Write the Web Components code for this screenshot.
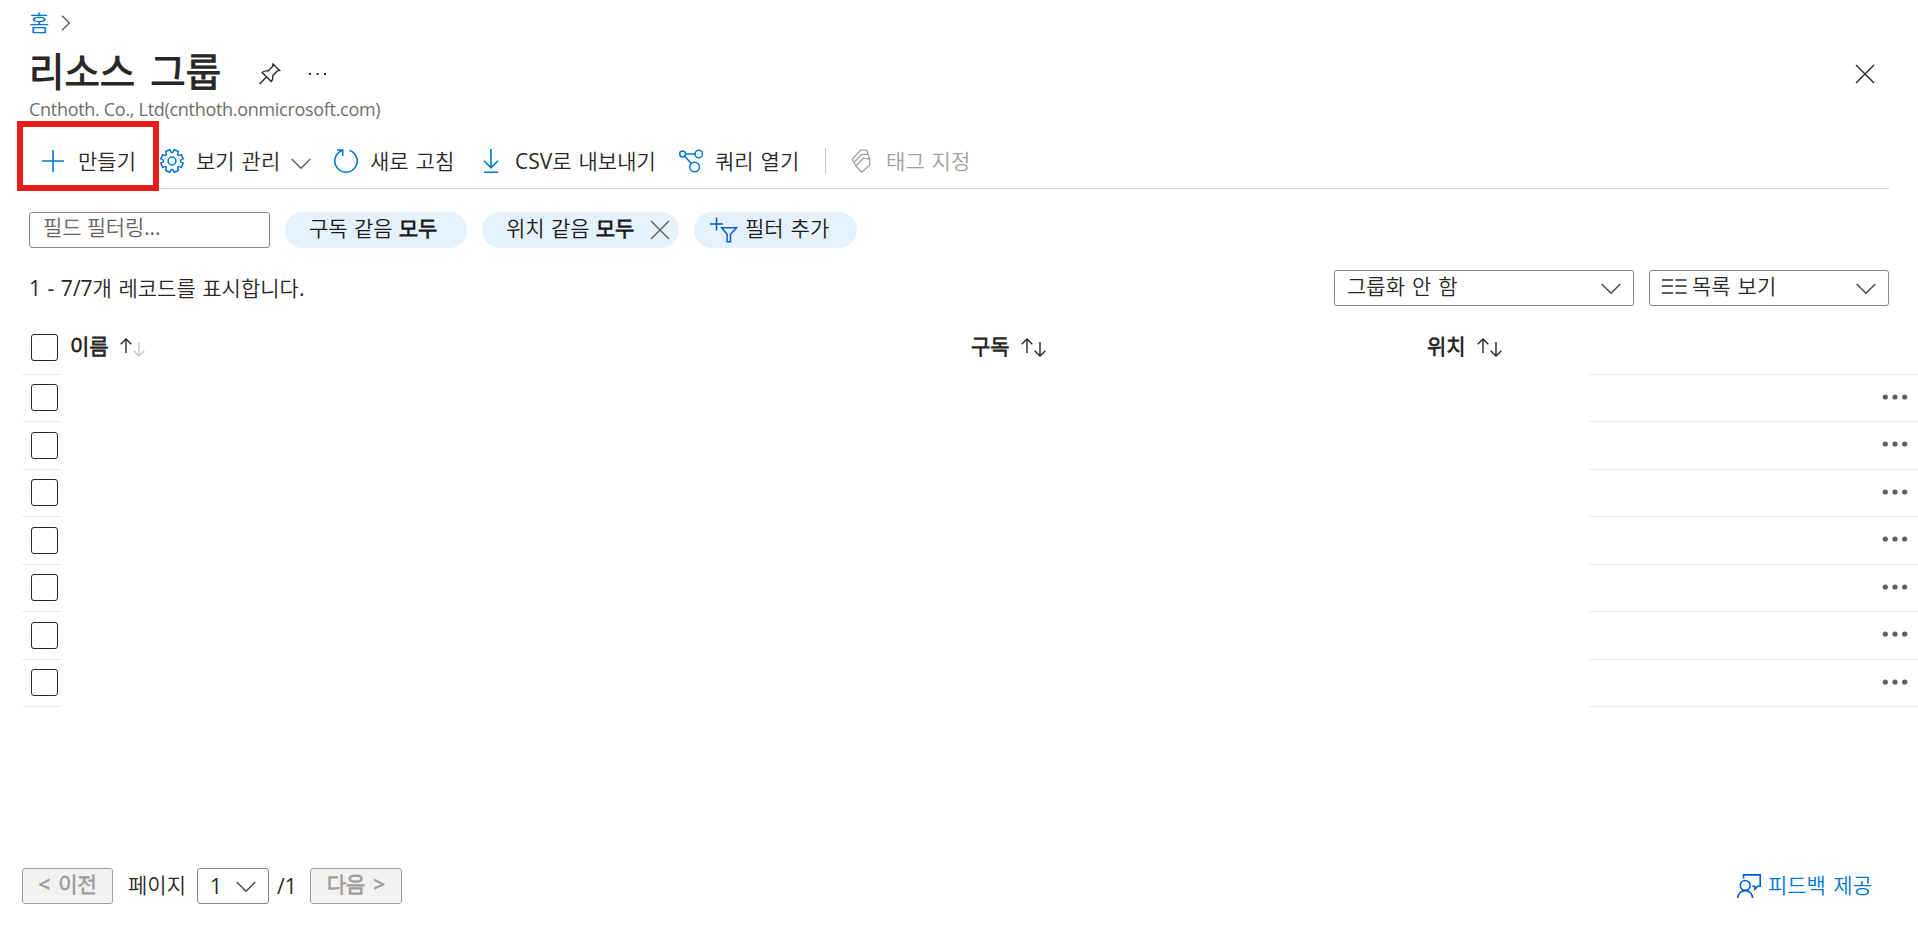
<!DOCTYPE html>
<html lang="ko">
<head>
<meta charset="utf-8">
<title>리소스 그룹</title>
<style>
  body {
    margin: 0;
    background: #fff;
    color: #292827;
    font: 21px/36px "Open Sans", "Noto Sans CJK KR DemiLight", "Noto Sans CJK KR Light", "Noto Sans CJK KR", sans-serif;
    word-spacing: 1.5px;
  }
</style>
</head>
<body>
<resource-page></resource-page>
<script>
// 톱니바퀴 외곽선 (톱니 8개)
const gearPath = () => {
  const points = [];
  for (let i = 0; i < 8; i++) {
    [[-0.3, 8.6], [-0.2, 11.4], [0.2, 11.4], [0.3, 8.6]].forEach(([offset, radius]) => {
      const angle = (i * Math.PI) / 4 + Math.PI / 8 + offset;
      points.push(`${(12 + radius * Math.cos(angle)).toFixed(2)} ${(12 + radius * Math.sin(angle)).toFixed(2)}`);
    });
  }
  return `M${points.join("L")}z`;
};

// name: [width, height, stroke width, markup]
const ICONS = {
  add: [24, 24, 1.6, `<path d="M11 1v22M0 12h22"/>`],
  gear: [24, 24, 1.5, `<path stroke-linejoin="round" d="${gearPath()}"/><circle cx="12" cy="12" r="3.9"/>`],
  refresh: [24, 24, 1.6, `<path d="M15.6 1.4A11.2 11.2 0 1 1 8.4 1.4M3 1h5.7v6"/>`],
  download: [24, 24, 1.6, `<path d="M12 0v18.5M5 11.8l7 7 7-7M5 23.2h14"/>`],
  query: [24, 24, 1.5, `<circle cx="3.6" cy="5" r="2.9"/><circle cx="19.8" cy="5" r="3.7"/><circle cx="15.6" cy="18" r="4.8"/><path d="M6.5 5h9.6M5.6 7.2l6.8 7.2"/>`],
  tag: [24, 24, 1.3, `<path d="M10.7 23.2l8-7.2v-6l-6.2-.8-7.7 7.8zM4.8 17L3 13.3l7.2-7.6 6.8-.5 1.7 4.8M3 13.3L1.2 10.3 9.5 1.2h6.2L17 5.2"/>`],
  pin: [22, 22, 1.4, `<path d="M14 1l6.6 6.6-2.2.3-4.6 4.7c.2 2.5-.2 4.6-1.6 5.9L3.2 9.5C5 8 7 7.6 9.2 8l4.4-4.6zM7.5 14l-7 7"/>`],
  dots: [18, 4, 0, `<path fill="currentColor" d="M0 1h2v2H0zM7.5 1h2v2h-2zM15 1h2v2h-2z"/>`],
  more: [26, 6, 0, `<g fill="currentColor"><circle cx="3.3" cy="3" r="2.6"/><circle cx="13" cy="3" r="2.6"/><circle cx="22.7" cy="3" r="2.6"/></g>`],
  close: [20, 20, 1.4, `<path d="M1 1l18 18M19 1L1 19"/>`],
  down: [20, 12, 1.4, `<path d="M.7 1l9.3 9.3L19.3 1"/>`],
  right: [10, 16, 1.4, `<path d="M1 .7L8.3 8 1 15.3"/>`],
  filter: [28, 26, 1.5, `<path d="M0 7h13M6.5.5v13M11.7 10.7h14.8l-6 6.5v7.6h-3.4v-7.6z"/>`],
  list: [25, 16, 2, `<path d="M0 2h11M13.5 2h11M0 8h11M13.5 8h11M0 15h11M13.5 15h11"/>`],
  feedback: [24, 24, 1.6, `<circle cx="8.2" cy="11.4" r="4.9"/><path d="M.8 24a7.4 7.4 0 0 1 14.8 0M6.5 4.5V.9h16.7v11.3h-2.4l-3 3v-3h-2.5"/>`],
  up: [12, 15, 1.4, `<path d="M6 15V1M.7 6.3L6 1l5.3 5.3"/>`],
  sortdown: [12, 15, 1.4, `<path d="M6 0v14M.7 8.7L6 14l5.3-5.3"/>`],
};

class AppIcon extends HTMLElement {
  connectedCallback() {
    const [w, h, stroke, markup] = ICONS[this.getAttribute("name")];
    this.attachShadow({ mode: "open" }).innerHTML = `
    <style>
      :host { display: block; flex: none; width: ${w}px; height: ${h}px; }
      svg { display: block; }
    </style>
    <svg width="${w}" height="${h}" viewBox="0 0 ${w} ${h}" fill="none" stroke="currentColor" stroke-width="${stroke}">${markup}</svg>`;
  }
}
customElements.define("app-icon", AppIcon);

class CommandItem extends HTMLElement {
  connectedCallback() {
    this.attachShadow({ mode: "open" }).innerHTML = `
    <style>
      :host { display: flex; align-items: center; white-space: nowrap; }
      .icon { color: #0078d4; margin-right: 12px; }
      .label { height: 37px; }
      .chevron { color: #605e5c; margin: 5px 0 0 11px; }
      :host([disabled]) { color: #a19f9d; }
      :host([disabled]) .icon { color: #a19f9d; margin-right: 11px; }
    </style>
    <app-icon class="icon" name="${this.getAttribute("icon")}"></app-icon>
    <span class="label"><slot></slot></span>
    ${this.hasAttribute("menu") ? `<app-icon class="chevron" name="down"></app-icon>` : ""}`;
  }
}
customElements.define("command-item", CommandItem);

class CommandBar extends HTMLElement {
  connectedCallback() {
    this.attachShadow({ mode: "open" }).innerHTML = `
    <style>
      :host {
        display: grid;
        position: relative;
        grid-template-columns: 118px 174px 145px 200px 146px 26px 200px;
        align-items: center;
        height: 54px;
        margin: 0 29px;
        padding-left: 13px;
        border-bottom: 1px solid #d2d0ce;
      }
      .separator { width: 1px; height: 26px; background: #c8c6c4; }
      .highlight {
        position: absolute;
        left: -12px;
        top: -13px;
        width: 142px;
        height: 70px;
        box-sizing: border-box;
        border: 6px solid #e81b1b;
      }
    </style>
    <command-item icon="add">만들기</command-item>
    <command-item icon="gear" menu>보기 관리</command-item>
    <command-item icon="refresh">새로 고침</command-item>
    <command-item icon="download">CSV로 내보내기</command-item>
    <command-item icon="query">쿼리 열기</command-item>
    <div class="separator"></div>
    <command-item icon="tag" disabled>태그 지정</command-item>
    <div class="highlight"></div>`;
  }
}
customElements.define("command-bar", CommandBar);

class PageHeader extends HTMLElement {
  connectedCallback() {
    this.attachShadow({ mode: "open" }).innerHTML = `
    <style>
      :host { display: block; height: 134px; padding: 0 43px 0 29px; box-sizing: border-box; }
      .crumb { display: flex; align-items: center; height: 46px; color: #0078d4; font-size: 22px; }
      .crumb span { height: 38px; }
      .crumb app-icon { color: #605e5c; margin-left: 12px; }
      .title { display: flex; align-items: center; height: 54px; }
      h1 {
        margin: 0;
        width: 230px;
        height: 56px;
        font-size: 38.5px;
        line-height: 52px;
        font-weight: 700;
        word-spacing: 5px;
        white-space: nowrap;
      }
      .title app-icon { margin-top: 2px; }
      .title .dots { margin-left: 28px; }
      .title .close { margin-left: auto; }
      .sub {
        color: #706e6c;
        font-size: 18px;
        line-height: 18px;
        letter-spacing: -0.3px;
        word-spacing: 0;
      }
    </style>
    <div class="crumb"><span>홈</span><app-icon name="right"></app-icon></div>
    <div class="title">
      <h1>리소스 그룹</h1>
      <app-icon name="pin"></app-icon>
      <app-icon class="dots" name="dots"></app-icon>
      <app-icon class="close" name="close"></app-icon>
    </div>
    <div class="sub">Cnthoth. Co., Ltd(cnthoth.onmicrosoft.com)</div>`;
  }
}
customElements.define("page-header", PageHeader);

class FilterPill extends HTMLElement {
  connectedCallback() {
    this.attachShadow({ mode: "open" }).innerHTML = `
    <style>
      :host {
        display: flex;
        align-items: center;
        box-sizing: border-box;
        height: 36px;
        border-radius: 18px;
        background: #e5f1fb;
        color: #1b1a19;
        word-spacing: 0.8px;
        white-space: nowrap;
      }
      .label { line-height: 32px; height: 36px; }
    </style>
    <slot name="before"></slot><span class="label"><slot></slot></span><slot name="after"></slot>`;
  }
}
customElements.define("filter-pill", FilterPill);

class FilterBar extends HTMLElement {
  connectedCallback() {
    this.attachShadow({ mode: "open" }).innerHTML = `
    <style>
      :host { display: flex; padding: 23px 29px 0; gap: 15px; }
      .input {
        box-sizing: border-box;
        width: 241px;
        height: 36px;
        padding-left: 13px;
        border: 1px solid #8a8886;
        border-radius: 3px;
        line-height: 29px;
        letter-spacing: -0.15px;
        word-spacing: 0;
        color: #666462;
      }
      .sub { width: 182px; padding-left: 24px; }
      .loc { width: 197px; padding-left: 24px; }
      .add { width: 163px; padding-left: 16px; word-spacing: 1.5px; }
      .loc app-icon { color: #605e5c; margin-left: 16px; }
      .add app-icon { color: #015cda; margin-right: 7px; }
    </style>
    <div class="input">필드 필터링...</div>
    <filter-pill class="sub">구독 같음 <b>모두</b></filter-pill>
    <filter-pill class="loc">위치 같음 <b>모두</b><app-icon slot="after" name="close"></app-icon></filter-pill>
    <filter-pill class="add"><app-icon slot="before" name="filter"></app-icon>필터 추가</filter-pill>`;
  }
}
customElements.define("filter-bar", FilterBar);

class SelectBox extends HTMLElement {
  connectedCallback() {
    this.attachShadow({ mode: "open" }).innerHTML = `
    <style>
      :host {
        display: flex;
        align-items: center;
        box-sizing: border-box;
        height: 36px;
        padding: 0 12px;
        border: 1px solid #8a8886;
        border-radius: 3px;
        white-space: nowrap;
      }
      .label { height: 34px; line-height: var(--label-line, 30px); }
      .chevron { margin: 1px 0 0 auto; color: #484644; }
    </style>
    <slot name="icon"></slot><span class="label"><slot></slot></span><app-icon class="chevron" name="down"></app-icon>`;
  }
}
customElements.define("select-box", SelectBox);

class RecordBar extends HTMLElement {
  connectedCallback() {
    this.attachShadow({ mode: "open" }).innerHTML = `
    <style>
      :host { display: flex; padding: 22px 29px 0; gap: 15px; }
      .count { flex: 1; word-spacing: 1.1px; }
      .group { width: 300px; }
      .view { width: 240px; }
      .view [slot] { color: #605e5c; margin: -4px 5px 0 0; }
    </style>
    <div class="count">1 - 7/7개 레코드를 표시합니다.</div>
    <select-box class="group">그룹화 안 함</select-box>
    <select-box class="view"><app-icon slot="icon" name="list"></app-icon>목록 보기</select-box>`;
  }
}
customElements.define("record-bar", RecordBar);

class CheckBox extends HTMLElement {
  connectedCallback() {
    this.attachShadow({ mode: "open" }).innerHTML = `
    <style>
      :host {
        display: block;
        box-sizing: border-box;
        width: 27px;
        height: 27px;
        border: 1px solid #292827;
        border-radius: 3px;
      }
    </style>`;
  }
}
customElements.define("check-box", CheckBox);

class ColumnTitle extends HTMLElement {
  connectedCallback() {
    this.attachShadow({ mode: "open" }).innerHTML = `
    <style>
      :host { display: flex; align-items: flex-start; font-weight: 700; line-height: 30px; }
      .up { margin: 7px 0 0 11px; }
      .down { margin: 11px 0 0 1px; }
      :host([sorted]) .down { color: #c8c6c4; }
    </style>
    <slot></slot>
    <app-icon class="up" name="up"></app-icon>
    <app-icon class="down" name="sortdown"></app-icon>`;
  }
}
customElements.define("column-title", ColumnTitle);

class ResourceTable extends HTMLElement {
  connectedCallback() {
    // 행 높이는 평균 47.5px
    const rows = Array.from({ length: 7 }, (_, i) => `
      <div class="row ${i % 2 ? "tall" : ""}">
        <div class="check"><check-box></check-box></div>
        <div class="menu"><app-icon name="more"></app-icon></div>
      </div>`).join("");
    this.attachShadow({ mode: "open" }).innerHTML = `
    <style>
      :host { display: block; padding: 25px 0 0 22px; }
      .head {
        display: grid;
        grid-template-columns: 48px 901px 456px 1fr;
        height: 43px;
      }
      .head check-box { margin: 3px 0 0 9px; }
      .row { display: flex; justify-content: space-between; height: 47px; }
      .tall { height: 48px; }
      .check, .menu { box-sizing: border-box; border-bottom: 1px solid #edebe9; }
      .check { width: 39px; padding: 9px 0 0 9px; }
      .tall .check { padding-top: 10px; }
      .menu { width: 329px; padding: 19px 10px 0 0; display: flex; justify-content: flex-end; color: #605e5c; }
      .first { height: 1px; }
      .first div { padding: 0; }
    </style>
    <div class="head">
      <check-box></check-box>
      <column-title sorted>이름</column-title>
      <column-title>구독</column-title>
      <column-title>위치</column-title>
    </div>
    <div class="row first"><div class="check"></div><div class="menu"></div></div>
    ${rows}`;
  }
}
customElements.define("resource-table", ResourceTable);

class PageFooter extends HTMLElement {
  connectedCallback() {
    this.attachShadow({ mode: "open" }).innerHTML = `
    <style>
      :host { display: flex; align-items: center; padding: 161px 46px 0 22px; white-space: nowrap; }
      .button {
        box-sizing: border-box;
        height: 36px;
        border: 1px solid #a19f9d;
        border-radius: 3px;
        background: #f3f2f1;
        color: #a19f9d;
        font-weight: 700;
        line-height: 30px;
        word-spacing: 2.5px;
        text-align: center;
      }
      .prev { width: 91px; }
      .next { width: 92px; }
      .page { width: 69px; height: 38px; margin: -1px 0 -1px 15px; }
      select-box { width: 72px; --label-line: 34px; }
      .total { width: 33px; margin-left: 8px; }
      .feedback { display: flex; align-items: center; gap: 7px; height: 36px; margin-left: auto; color: #0078d4; }
      .feedback app-icon { color: #015cda; }
      .feedback span { height: 38px; word-spacing: 2px; }
    </style>
    <div class="button prev">&lt; 이전</div>
    <div class="page">페이지</div>
    <select-box>1</select-box>
    <div class="total">/1</div>
    <div class="button next">다음 &gt;</div>
    <div class="feedback"><app-icon name="feedback"></app-icon><span>피드백 제공</span></div>`;
  }
}
customElements.define("page-footer", PageFooter);

class ResourcePage extends HTMLElement {
  connectedCallback() {
    this.attachShadow({ mode: "open" }).innerHTML = `
    <style>
      :host { display: block; height: 928px; overflow: hidden; }
    </style>
    <page-header></page-header>
    <command-bar></command-bar>
    <filter-bar></filter-bar>
    <record-bar></record-bar>
    <resource-table></resource-table>
    <page-footer></page-footer>`;
  }
}
customElements.define("resource-page", ResourcePage);
</script>
</body>
</html>
